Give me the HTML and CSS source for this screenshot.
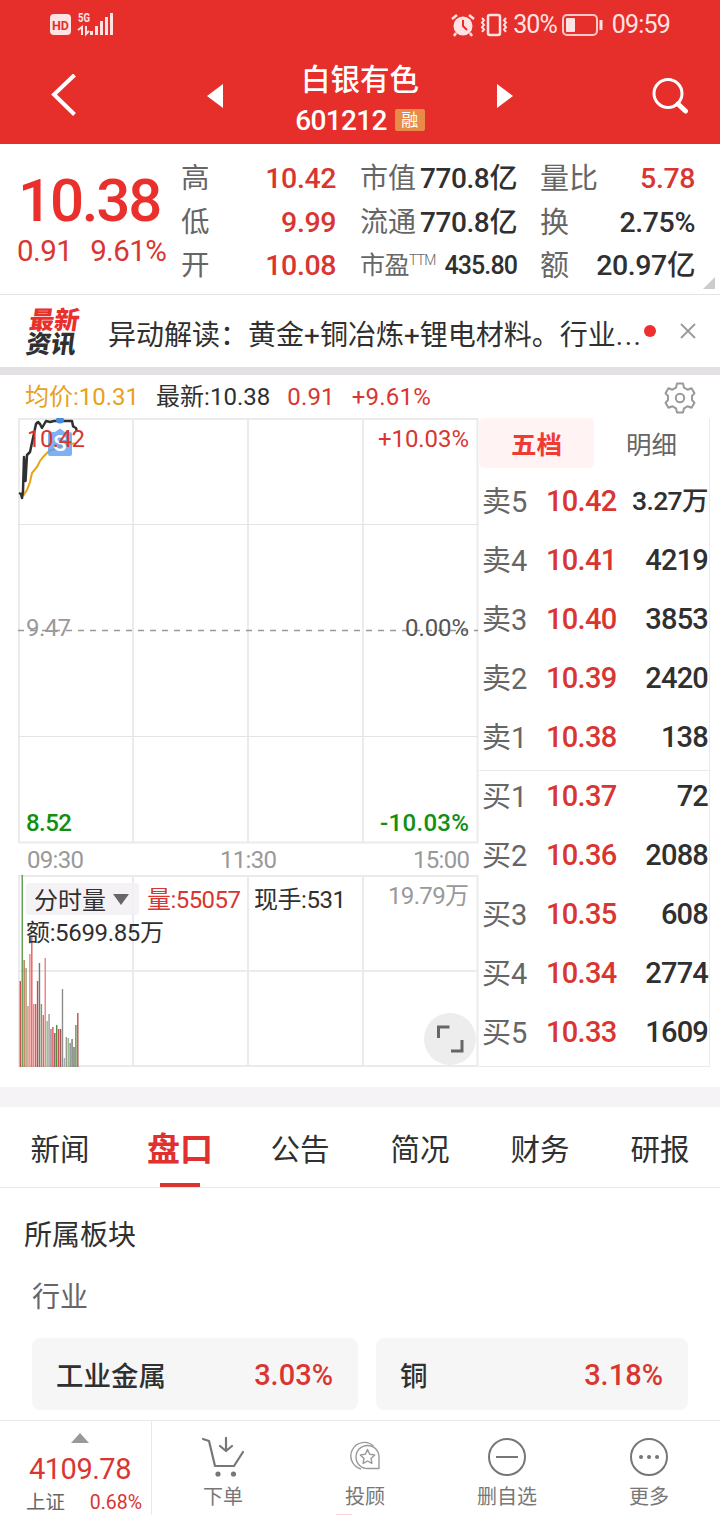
FILE: index.html
```html
<!DOCTYPE html>
<html lang="zh-CN">

<head>
    <meta charset="UTF-8">
    <meta name="viewport" content="width=device-width, initial-scale=1.0">
    <title>白银有色 601212</title>
    <link rel="stylesheet" href="styles.css">
</head>

<body>
    <header class="top">
        <div class="status">
            <svg class="status-left" width="66" height="26" viewBox="0 0 66 26">
                <rect x="0" y="3" width="21" height="21" rx="4" fill="#ffe3e3"/>
                <text x="10.500" y="18.500" text-anchor="middle" font-size="13" font-weight="700" textLength="17" lengthAdjust="spacingAndGlyphs" fill="#e52e2c">HD</text>
                <text x="28" y="11" font-size="13" font-weight="700" textLength="12" lengthAdjust="spacingAndGlyphs" fill="#ffe3e3">5G</text>
                <path d="M28 19l4-3v8M36 15v8l3-3" fill="none" stroke="#ffe3e3" stroke-width="2"/>
                <path d="M41.500 20v4M46.500 15v9M51.500 10v14M56.500 6v18M61.500 2v22" stroke="#ffe3e3" stroke-width="3"/>
            </svg>
            <div class="status-right">
                <svg width="24" height="24" viewBox="0 0 24 24">
                    <circle cx="12" cy="13" r="9.500" fill="#ffe3e3"/>
                    <path d="M1 6l5-4M23 6l-5-4M5 20l-2 3M19 20l2 3" stroke="#ffe3e3" stroke-width="2.500"/>
                    <path d="M12 7v6l4 4" fill="none" stroke="#e52e2c" stroke-width="2"/>
                </svg>
                <svg class="vibrate" width="28" height="24" viewBox="0 0 28 24">
                    <rect x="8" y="2" width="12" height="20" rx="2" fill="none" stroke="#ffe3e3" stroke-width="2.500"/>
                    <path d="M2 5l2 2.300-2 2.300 2 2.300-2 2.300 2 2.300-2 2.300M26 5l-2 2.300 2 2.300-2 2.300 2 2.300-2 2.300 2 2.300" fill="none" stroke="#ffe3e3" stroke-width="2"/>
                </svg>
                <span class="percent">30%</span>
                <svg class="battery" width="41" height="22" viewBox="0 0 41 22">
                    <rect x="1" y="1" width="34" height="20" rx="4" fill="none" stroke="#ffc9c9" stroke-width="2"/>
                    <rect x="4" y="4" width="9" height="14" rx="1" fill="#ffe3e3"/>
                    <path d="M39 6v10" stroke="#ffe3e3" stroke-width="3"/>
                </svg>
                <span>09:59</span>
            </div>
        </div>
        <nav class="title-bar">
            <svg width="26" height="44" viewBox="0 0 26 44"><path d="M23.500 1L3 20.500l20.500 20" fill="none" stroke="#fff" stroke-width="4"/></svg>
            <svg class="prev" width="16" height="24" viewBox="0 0 16 24"><path d="M16 0v24L0 12z" fill="#fff"/></svg>
            <div class="stock">
                <h1>白银有色</h1>
                <div class="code"><span>601212</span><b>融</b></div>
            </div>
            <svg class="next" width="16" height="24" viewBox="0 0 16 24"><path d="M0 0v24l16-12z" fill="#fff"/></svg>
            <svg class="search" width="36" height="36" viewBox="0 0 36 36">
                <circle cx="16" cy="15.500" r="14" fill="none" stroke="#fff" stroke-width="3"/>
                <path d="M26 26l7.500 7" stroke="#fff" stroke-width="5" stroke-linecap="round"/>
            </svg>
        </nav>
    </header>

    <section class="quote">
        <div class="price">
            <strong>10.38</strong>
            <div><span>0.91</span><span>9.61%</span></div>
        </div>
        <dl class="col high">
            <div><dt>高</dt><dd class="up">10.42</dd></div>
            <div><dt>低</dt><dd class="up">9.99</dd></div>
            <div><dt>开</dt><dd class="up">10.08</dd></div>
        </dl>
        <dl class="col cap">
            <div><dt>市值</dt><dd>770.8亿</dd></div>
            <div><dt>流通</dt><dd>770.8亿</dd></div>
            <div class="pe"><dt>市盈<sup>TTM</sup></dt><dd>435.80</dd></div>
        </dl>
        <dl class="col ratio">
            <div><dt>量比</dt><dd class="up">5.78</dd></div>
            <div><dt>换</dt><dd>2.75%</dd></div>
            <div><dt>额</dt><dd>20.97亿</dd></div>
        </dl>
        <i class="corner"></i>
    </section>

    <section class="news">
        <div class="news-logo"><span>最新</span><span>资讯</span></div>
        <p>异动解读：黄金+铜冶炼+锂电材料。行业<span>...</span></p>
        <i class="dot"></i>
        <svg width="16" height="16" viewBox="0 0 16 16"><path d="M1 1l14 14M15 1L1 15" stroke="#999" stroke-width="1.800"/></svg>
    </section>

    <section class="summary">
        <span class="avg">均价:10.31</span>
        <span class="last">最新:10.38</span>
        <span class="up">0.91</span>
        <span class="up">+9.61%</span>
        <svg width="32" height="32" viewBox="0 0 32 32" fill="none" stroke="#999" stroke-width="2" stroke-linejoin="round">
            <path d="M13 1.500h6l1 4.200 3.500 2 4-1.500 3 5L28 14v4l2.500 2.800-3 5-4-1.500-3.500 2-1 4.200h-6l-1-4.200-3.500-2-4 1.500-3-5L4 18v-4l-2.500-2.800 3-5 4 1.500 3.500-2z"/>
            <circle cx="16" cy="16" r="4.200"/>
        </svg>
    </section>

    <main class="market">
        <svg class="chart" width="461" height="650" viewBox="18 418 461 650">
            <g class="grid">
                <path d="M19 418v425M133 418v425M248 418v425M363 418v425M477.500 418v425M18 419h460M18 842.500h460"/>
                <path d="M19 875v192M133 875v192M248 875v192M363 875v192M477.500 875v192M18 876h460M18 971h460M18 1066h460"/>
                <path class="thin" d="M18 524.500h460M18 736.500h460"/>
                <path class="zero" d="M18 630.500h460"/>
            </g>
            <g id="bars"></g>
            <path d="M23 496l4-6 3-8 2-9 5-6 3-6 4-5 5-5 6-2 6-3 7-2 8-.500" fill="none" stroke="#e8a317" stroke-width="2"/>
            <path d="M19 493l2 1 1 4 1-7 1-34 1.500 24 1.500-26 3-3 3-14 3-14 2-2 2 2 2 4 4-7 4 1 4-1h18l1 5 1 1 2 1 1 4" fill="none" stroke="#303030" stroke-width="2.500" stroke-linejoin="round"/>
            <ellipse cx="60" cy="420" rx="4" ry="3.500" fill="#438ddf"/>
            <path d="M50 432h5l5-3.500 5 3.500h5q2 0 2 2v20q0 2-2 2H50q-2 0-2-2v-20q0-2 2-2z" fill="#5b9ff0" fill-opacity=".8"/>
            <text x="60" y="451" class="mark">S</text>
            <text x="27" y="447" class="up" textLength="58">10.42</text>
            <text x="378" y="447" class="up" textLength="91">+10.03%</text>
            <text x="26" y="636" fill="#999" textLength="45">9.47</text>
            <text x="405" y="636" fill="#555" textLength="64">0.00%</text>
            <text x="26" y="831" class="down" textLength="46">8.52</text>
            <text x="380" y="831" class="down" textLength="89">-10.03%</text>
            <text x="27" y="868" class="time" textLength="57">09:30</text>
            <text x="220" y="868" class="time" textLength="57">11:30</text>
            <text x="413" y="868" class="time" textLength="57">15:00</text>
            <rect x="26" y="883" width="113" height="32" rx="3" fill="#f4f1f4" fill-opacity=".9"/>
            <text x="34" y="909" textLength="72" class="ink">分时量</text>
            <path d="M113 894h16l-8 11z" fill="#666"/>
            <text x="147" y="908" class="up" textLength="94">量:55057</text>
            <text x="254" y="908" class="ink" textLength="92">现手:531</text>
            <text x="388" y="904" class="time" textLength="81">19.79万</text>
            <text x="26" y="941" class="ink" textLength="138">额:5699.85万</text>
            <circle cx="450" cy="1039" r="26" fill="#ededed"/>
            <path d="M438.500 1038v-11h11M451 1051h11v-11" fill="none" stroke="#666" stroke-width="3"/>
        </svg>

        <div class="book">
            <div class="book-tabs"><b>五档</b><span>明细</span></div>
            <ul>
                <li><span>卖5</span><b>10.42</b><em class="wan">3.27万</em></li>
                <li><span>卖4</span><b>10.41</b><em>4219</em></li>
                <li><span>卖3</span><b>10.40</b><em>3853</em></li>
                <li><span>卖2</span><b>10.39</b><em>2420</em></li>
                <li><span>卖1</span><b>10.38</b><em>138</em></li>
            </ul>
            <ul class="buy">
                <li><span>买1</span><b>10.37</b><em>72</em></li>
                <li><span>买2</span><b>10.36</b><em>2088</em></li>
                <li><span>买3</span><b>10.35</b><em>608</em></li>
                <li><span>买4</span><b>10.34</b><em>2774</em></li>
                <li><span>买5</span><b>10.33</b><em>1609</em></li>
            </ul>
        </div>
    </main>

    <nav class="tabs">
        <a>新闻</a>
        <a class="active">盘口</a>
        <a>公告</a>
        <a>简况</a>
        <a>财务</a>
        <a>研报</a>
    </nav>

    <section class="sector">
        <h2>所属板块</h2>
        <h3>行业</h3>
        <div class="cards">
            <div class="card"><span>工业金属</span><b>3.03%</b></div>
            <div class="card"><span>铜</span><b>3.18%</b></div>
        </div>
    </section>

    <footer class="bottom">
        <div class="index">
            <i class="arrow-up"></i>
            <strong>4109.78</strong>
            <div><span>上证</span><em>0.68%</em></div>
        </div>
        <a>
            <svg width="42" height="40" viewBox="0 0 42 40" fill="none" stroke="#777" stroke-width="2.200" stroke-linecap="round" stroke-linejoin="round">
                <path d="M1 2l6 2 6 25h19l9-14M24 1v12M18 9l6 5 6-5"/>
                <circle cx="16" cy="37" r="1.500" fill="#777"/><circle cx="31.500" cy="37" r="1.500" fill="#777"/>
            </svg>
            <span>下单</span>
        </a>
        <a>
            <svg width="42" height="40" viewBox="-1 0 42 40" fill="none" stroke="#999" stroke-width="1.400" stroke-linejoin="round">
                <path d="M16 32A13.500 13.500 0 1 1 28.500 9"/>
                <path d="M22.500 8.500a11.500 11.500 0 0 1 11.500 11.500v11.500H22.500a11.500 11.500 0 0 1 0-23z"/>
                <path d="M22.500 12.500l2.200 4.700 5 .7-3.700 3.500.9 5-4.400-2.400-4.400 2.400.9-5-3.700-3.500 5-.7z"/>
            </svg>
            <span>投顾</span>
        </a>
        <a>
            <svg width="42" height="40" viewBox="0 0 42 40" fill="none" stroke="#777" stroke-width="2">
                <circle cx="21" cy="20" r="18"/><path d="M10 20h22"/>
            </svg>
            <span>删自选</span>
        </a>
        <a>
            <svg width="42" height="40" viewBox="0 0 42 40" fill="none" stroke="#777" stroke-width="2">
                <circle cx="21" cy="20" r="18"/>
                <path d="M13 20h.1M21 20h.1M29 20h.1" stroke-width="4" stroke-linecap="round"/>
            </svg>
            <span>更多</span>
        </a>
        <i class="hint"></i>
    </footer>

    <script>
        // volume per minute: [top of the bar, colour]
        const volumes = [
            [981, "#c9504c"], [875, "#5c9c4c"], [960, "#b87458"], [968, "#a89868"], [1006, "#dc8878"],
            [954, "#f08080"], [936, "#e06060"], [1004, "#f08080"], [1004, "#dd5555"], [981, "#b85050"],
            [963, "#777"], [1004, "#6ba45c"], [1015, "#dd6666"], [958, "#ee8080"], [1021, "#8cb880"],
            [1014, "#999"], [1029, "#888"], [1027, "#dd5555"], [1033, "#885555"], [1025, "#4c8c44"],
            [1029, "#c85050"], [1029, "#a05555"], [989, "#8c8c8c"], [1058, "#aaa"], [1037, "#999"],
            [1038, "#88bb80"], [1043, "#888"], [1039, "#777"], [1047, "#5c7c5c"], [1025, "#6c8c50"],
            [1013, "#bb5050"]
        ];
        let bars = "";
        volumes.forEach(([top, color], i) => {
            bars += `<rect x="${19.6 + i * 1.917}" y="${top}" width="1.4" height="${1067 - top}" fill="${color}"/>`;
        });
        document.getElementById("bars").innerHTML = bars;
    </script>
</body>

</html>
```

FILE: styles.css
```css
* {
    box-sizing: border-box;
}

body {
    margin: 0;
    width: 720px;
    height: 1515px;
    overflow: hidden;
    display: flex;
    flex-direction: column;
    background-color: #fff;
    color: #303030;
    font-family: Roboto, "Noto Sans CJK SC", sans-serif;
}

h1, h2, h3, p, ul, dl, dd {
    margin: 0;
    padding: 0;
    font-weight: 400;
}

em, i {
    font-style: normal;
}

svg {
    flex: none;
}

.up {
    color: #d93632;
    fill: #d93632;
}

/* header */
.top {
    height: 144px;
    background-color: #e62e2b;
    color: #fff;
}

.status {
    height: 48px;
    padding: 0 50px;
    display: flex;
    align-items: center;
    justify-content: space-between;
    color: #ffe3e3;
    font-size: 25px;
}

.status-right {
    display: flex;
    align-items: center;
    padding-top: 1px;
    line-height: 48px;
}

.vibrate {
    margin-left: 5px;
}

.percent {
    margin-left: 5px;
    letter-spacing: -1px;
}

.battery {
    margin: 0 9px 0 5px;
}

.battery + span {
    letter-spacing: -0.8px;
}

.title-bar {
    height: 96px;
    padding: 0 32px 0 51px;
    display: flex;
    align-items: center;
}

.prev {
    margin-left: 130px;
}

.stock {
    width: 274px;
    height: 96px;
    padding-top: 11px;
    text-align: center;
}

h1 {
    font-size: 29.500px;
    font-weight: 500;
    line-height: 42px;
}

.code {
    display: flex;
    justify-content: center;
    align-items: center;
    gap: 8px;
    height: 38px;
    font-size: 28px;
    font-weight: 500;
    letter-spacing: -0.7px;
}

.code b {
    width: 30px;
    height: 22px;
    border-radius: 2px;
    background-color: #e78b47;
    font-size: 17px;
    font-weight: 400;
    line-height: 22px;
    letter-spacing: 0;
}

.search {
    margin-left: auto;
}

/* quote */
.quote {
    position: relative;
    height: 151px;
    display: flex;
    border-bottom: 1px solid #e4e4e4;
}

.price {
    width: 181px;
    padding: 24px 0 0 17px;
    color: #d93632;
}

.price strong {
    display: block;
    margin-left: 1px;
    color: #e9302c;
    font-size: 60px;
    font-weight: 500;
    line-height: 66px;
    letter-spacing: -2.2px;
}

.price div {
    display: flex;
    gap: 18px;
    font-size: 29.500px;
    line-height: 34px;
    letter-spacing: -0.6px;
}

.col {
    padding-top: 13px;
}

.col div {
    display: flex;
    justify-content: space-between;
    height: 43.500px;
    line-height: 44px;
    font-size: 28.500px;
}

.col dt {
    color: #666;
}

.col dd {
    font-weight: 500;
    letter-spacing: -0.4px;
}

.high {
    width: 155px;
}

.cap {
    width: 157px;
    margin-left: 24px;
}

.cap div {
    font-size: 28px;
}

.cap .pe {
    font-size: 25px;
}

.cap .pe dd {
    letter-spacing: -0.9px;
}

.pe dt {
    letter-spacing: -0.5px;
}

.pe sup {
    font-size: 14px;
    font-weight: 300;
    line-height: 1;
    letter-spacing: -0.8px;
}

.ratio {
    width: 155px;
    margin-left: 23px;
}

.ratio dt {
    font-size: 29px;
}

.corner {
    position: absolute;
    right: 5px;
    bottom: 5px;
    border: 6px solid transparent;
    border-right-color: #ccc;
    border-bottom-color: #ccc;
}

/* news */
.news {
    height: 80px;
    padding: 0 24px 0 28px;
    display: flex;
    align-items: center;
    border-bottom: 8px solid #e4e1e4;
}

.news-logo {
    width: 80px;
    padding-top: 3px;
    display: flex;
    flex-direction: column;
    font-size: 25px;
    font-weight: 900;
    line-height: 24px;
    transform: skewX(-8deg);
}

.news-logo span:first-child {
    color: #e9302c;
}

.news p {
    flex: none;
    width: 536px;
    font-size: 28px;
    line-height: 40px;
    padding-top: 9px;
    white-space: nowrap;
}

.news p span {
    letter-spacing: 1.5px;
}

.dot {
    width: 12px;
    height: 12px;
    border-radius: 50%;
    background-color: #ee2f2f;
}

.news svg {
    margin-left: auto;
}

/* price line above the chart */
.summary {
    height: 43px;
    padding: 0 24px 0 25px;
    display: flex;
    align-items: baseline;
    gap: 17px;
    font-size: 24px;
    line-height: 45px;
}

.summary .up {
    letter-spacing: 0.2px;
}

.avg {
    color: #e8a020;
}

.summary svg {
    align-self: center;
    margin: 3px 0 0 auto;
}

.market {
    height: 669px;
    padding-left: 18px;
    display: flex;
}

.chart text {
    font-size: 24px;
}

.chart .ink {
    fill: #303030;
}

.grid path {
    fill: none;
    stroke: #ebebeb;
    stroke-width: 2;
}

.grid .thin {
    stroke: #e4e4e4;
    stroke-width: 1;
}

.grid .zero {
    stroke: #999;
    stroke-width: 1.500;
    stroke-dasharray: 6 6;
}

.chart .down {
    fill: #109010;
    font-weight: 500;
}

.chart .time {
    fill: #999;
}

.chart .mark {
    fill: #fff;
    font-size: 22px;
    font-weight: 500;
    text-anchor: middle;
}

/* order book */
.book {
    width: 231px;
    height: 649px;
    border: solid #ebebeb;
    border-width: 0 1px 1px 0;
}

.book-tabs {
    display: flex;
    height: 54px;
    font-size: 25.500px;
    line-height: 54px;
    text-align: center;
}

.book-tabs b {
    width: 115px;
    height: 50px;
    border-radius: 5px;
    background-color: #fff3f4;
    color: #ef3b32;
}

.book-tabs span {
    flex: 1;
    color: #666;
}

.book li {
    display: flex;
    height: 59px;
    padding: 0 1px 0 3px;
    font-size: 29px;
    line-height: 58px;
    list-style: none;
}

.book li span {
    width: 64px;
    color: #666;
    line-height: 60px;
}

.book li b {
    color: #d93632;
    font-weight: 500;
    letter-spacing: -0.7px;
}

.book li em {
    flex: 1;
    text-align: right;
    font-weight: 500;
    letter-spacing: -0.8px;
}

.book li .wan {
    font-size: 26.500px;
    letter-spacing: -0.6px;
}

.buy {
    position: relative;
}

.buy::before {
    content: "";
    position: absolute;
    top: 3px;
    left: 0;
    right: 0;
    border-top: 1px solid #ebebeb;
}

/* section tabs */
.tabs {
    height: 101px;
    display: grid;
    grid-template-columns: repeat(6, 1fr);
    grid-template-rows: 80px;
    border-top: 20px solid #f6f3f6;
    border-bottom: 1px solid #e8e8e8;
    font-size: 29.500px;
    line-height: 86px;
    text-align: center;
}

.tabs .active {
    position: relative;
    color: #e03030;
    font-size: 33px;
    font-weight: 700;
}

.active::after {
    content: "";
    position: absolute;
    left: 40px;
    bottom: 0;
    width: 40px;
    height: 4px;
    background-color: #d93632;
}

.sector {
    height: 232px;
    padding: 24px 32px 0 24px;
}

.sector h2 {
    font-size: 28px;
    line-height: 48px;
}

.sector h3 {
    margin: 14px 0 0 8px;
    color: #666;
    font-size: 28px;
    line-height: 48px;
}

.cards {
    margin: 16px 0 0 8px;
    display: grid;
    grid-template-columns: 326px 312px;
    gap: 18px;
}

.card {
    height: 72px;
    padding: 0 25px 0 24px;
    display: flex;
    justify-content: space-between;
    border-radius: 8px;
    background-color: #f6f6f6;
    font-size: 27.500px;
    line-height: 77px;
}

.card span {
    font-weight: 500;
}

.card b {
    color: #d93632;
    font-weight: 500;
    font-size: 29px;
    line-height: 74px;
}

/* bottom bar */
.bottom {
    position: relative;
    height: 95px;
    display: flex;
    border-top: 1px solid #e8e8e8;
    background-color: #fff;
}

.index {
    width: 152px;
    padding: 12px 9px 0 26px;
    display: flex;
    flex-direction: column;
    border-right: 1px solid #e8e8e8;
    color: #d93632;
}

.arrow-up {
    align-self: center;
    margin-right: 8px;
    border: 9px solid transparent;
    border-top: 0;
    border-bottom: 10px solid #999;
}

.index strong {
    margin: 8px 0 0 3px;
    font-size: 29px;
    font-weight: 400;
    line-height: 36px;
    letter-spacing: -0.5px;
}

.index div {
    display: flex;
    justify-content: space-between;
    font-size: 19.500px;
    line-height: 32px;
}

.index div span {
    color: #666;
}

.bottom a {
    flex: 1;
    display: flex;
    flex-direction: column;
    align-items: center;
    padding-top: 16px;
    color: #777;
    font-size: 20px;
    line-height: 40px;
}

.hint {
    position: absolute;
    left: 336px;
    bottom: 0;
    width: 16px;
    height: 1px;
    background-color: #ffd5dc;
}
```
